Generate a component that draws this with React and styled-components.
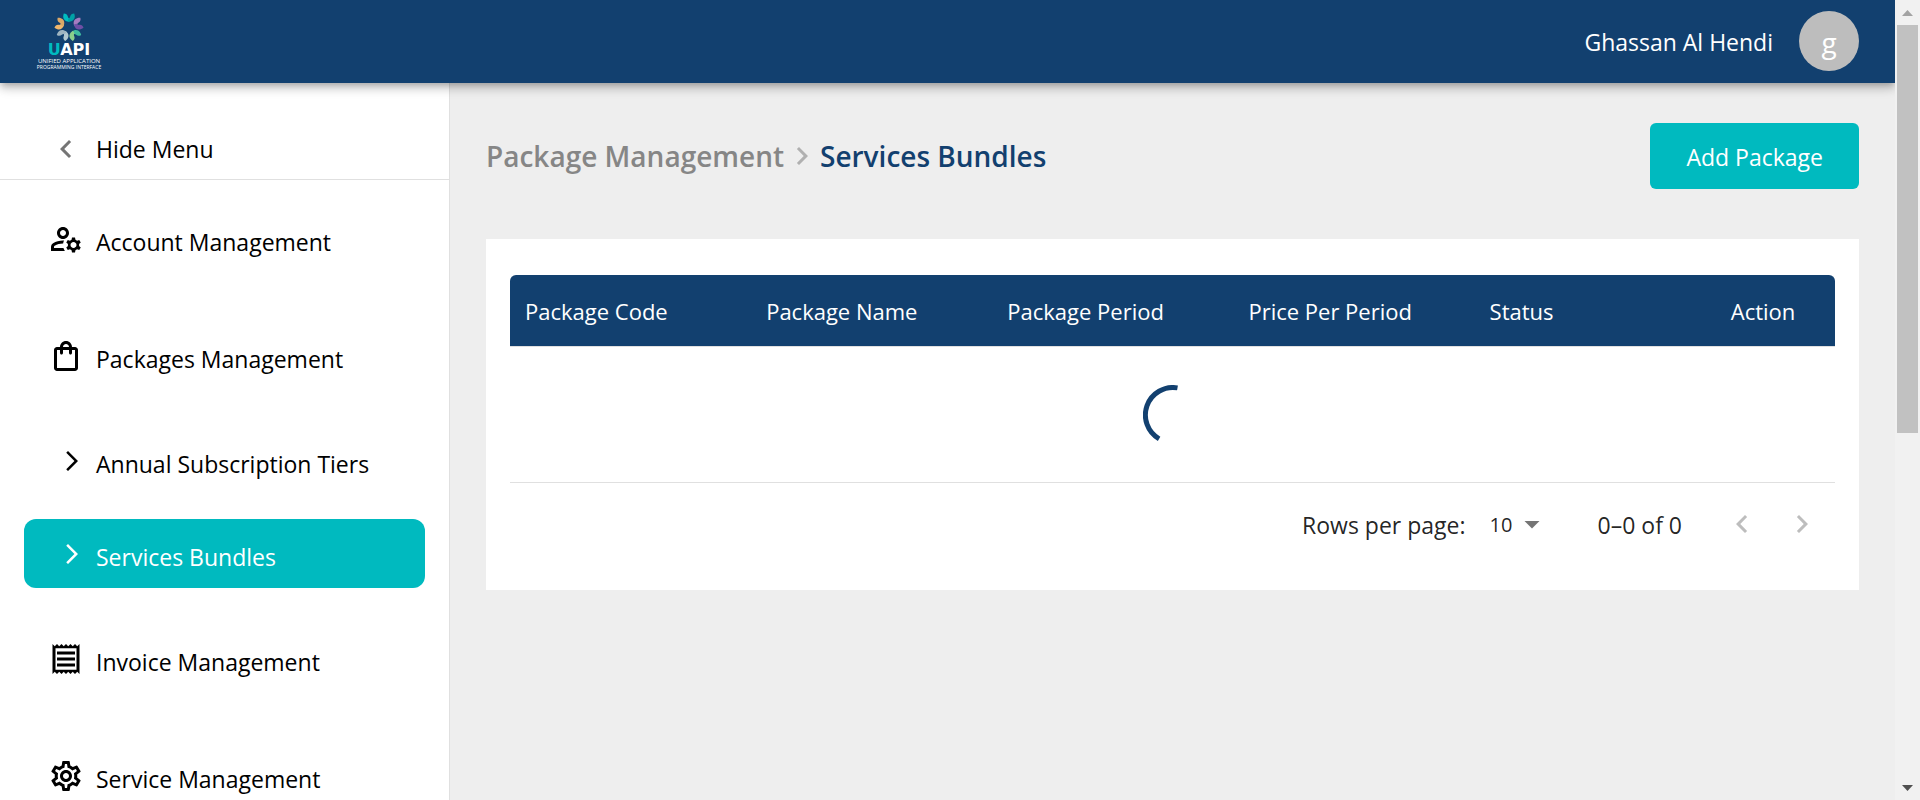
import React from "react";
import styled, { createGlobalStyle } from "styled-components";
import {
  MdArrowDropDown,
  MdArrowForwardIos,
  MdChevronLeft,
  MdChevronRight,
  MdOutlineManageAccounts,
  MdOutlineReceipt,
  MdOutlineSettings,
  MdOutlineShoppingBag,
} from "react-icons/md";

const color = {
  navy: "#12406f",
  teal: "#00babf",
  page: "#eeeeee",
  line: "#e0e0e0",
  muted: "#868686",
  disabled: "#bdbdbd",
  text: "rgba(0, 0, 0, 0.87)",
};

const GlobalStyle = createGlobalStyle`
  *, *::before, *::after { box-sizing: border-box; }
  body {
    margin: 0;
    overflow: hidden;
    background: ${color.page};
    font-family: "Open Sans", "Noto Sans", sans-serif;
    font-size: 23px;
    line-height: 32px;
    color: #000;
  }
  button, select { font: inherit; color: inherit; }
  svg { display: block; flex: none; }
`;

const Window = styled.div`
  display: flex;
  height: 100vh;
  overflow: hidden;
`;

const Shell = styled.div`
  flex: 1;
  min-width: 0;
  display: flex;
  flex-direction: column;
  overflow: hidden;
`;

const TopBar = styled.header`
  flex: none;
  display: flex;
  align-items: center;
  justify-content: space-between;
  height: 83px;
  padding: 0 36px 2px;
  background: ${color.navy};
  color: #fff;
  z-index: 1;
  box-shadow: 0 3px 6px -2px rgba(0, 0, 0, 0.2), 0 6px 8px rgba(0, 0, 0, 0.14),
    0 2px 15px rgba(0, 0, 0, 0.12);
`;

const Logo = styled.a`
  display: flex;
  flex-direction: column;
  align-items: center;
  width: 66px;
  color: #fff;
  text-decoration: none;
  white-space: nowrap;
`;

const Wordmark = styled.span`
  font-family: "DejaVu Sans", sans-serif;
  font-weight: 700;
  font-size: 16px;
  line-height: 16px;
`;

const WordmarkAccent = styled.span`
  color: ${color.teal};
`;

const Tagline = styled.span`
  font-size: ${(p) => p.$size}px;
  line-height: 6px;
`;

const User = styled.div`
  display: flex;
  align-items: center;
  gap: 26px;
`;

const Avatar = styled.span`
  display: flex;
  align-items: center;
  justify-content: center;
  width: 60px;
  height: 60px;
  padding-top: 2px;
  border-radius: 50%;
  background: ${color.disabled};
  font-size: 28px;
`;

const UserName = styled.span`
  padding-top: 2px;
`;

const Body = styled.div`
  flex: 1;
  min-height: 0;
  display: flex;
`;

const Sidebar = styled.nav`
  flex: none;
  width: 450px;
  overflow: hidden;
  background: #fff;
  border-right: 1px solid ${color.line};
`;

const HideMenu = styled.button`
  display: flex;
  align-items: center;
  gap: 12px;
  width: 100%;
  padding: 48px 48px 12px;
  border: 0;
  border-bottom: 1px solid ${color.line};
  background: none;
  text-align: left;

  svg { color: #757575; }
`;

const MenuList = styled.ul`
  display: flex;
  flex-direction: column;
  margin: 0;
  padding: 0 24px;
  list-style: none;
`;

const MenuItem = styled.li`
  padding: ${(p) => (p.$sub ? 12 : 24)}px 0;
`;

const MenuLink = styled.a`
  display: flex;
  align-items: center;
  gap: 12px;
  height: 69px;
  padding: 0 24px;
  border-radius: 12px;
  background: ${(p) => (p.$active ? color.teal : "transparent")};
  color: ${(p) => (p.$active ? "#fff" : "#000")};
  text-decoration: none;
`;

const MenuIcon = styled.span`
  display: flex;
  justify-content: flex-end;
  width: 36px;
`;

const MenuLabel = styled.span`
  padding-top: 6px;
`;

const Main = styled.main`
  flex: 1;
  min-width: 0;
  padding: 40px 36px;
`;

const PageHead = styled.div`
  display: flex;
  align-items: center;
  justify-content: space-between;
  margin-bottom: 50px;
`;

const Crumbs = styled.ol`
  display: flex;
  align-items: center;
  margin: 0;
  padding: 0;
  list-style: none;
  font-size: 28px;
  line-height: 40px;
  font-weight: 600;
  color: ${color.muted};

  li { display: flex; align-items: center; }
  svg { color: #b0b0b0; }
`;

const CrumbLink = styled.a`
  color: ${(p) => (p.$current ? color.navy : color.muted)};
  text-decoration: none;
`;

const PrimaryButton = styled.button`
  height: 66px;
  padding: 2px 36px 0;
  border: 0;
  border-radius: 6px;
  background: ${color.teal};
  color: #fff;
`;

const Card = styled.section`
  padding: 36px 24px;
  background: #fff;
`;

const Table = styled.table`
  width: 100%;
  table-layout: fixed;
  border-collapse: separate;
  border-spacing: 0;
`;

const HeadCell = styled.th`
  height: 72px;
  padding: 0 15px;
  background: ${color.navy};
  background-clip: padding-box;
  border-bottom: 1px solid ${color.line};
  color: #fff;
  font-size: 22px;
  font-weight: 400;
  text-align: left;
  white-space: nowrap;

  &:first-child { border-top-left-radius: 6px; }
  &:last-child { width: 9%; border-top-right-radius: 6px; }
`;

const LoadingCell = styled.td`
  height: 136px;
  padding: 0;
  border-bottom: 1px solid ${color.line};

  svg { margin: 0 auto; }
`;

const Pagination = styled.div`
  display: flex;
  align-items: center;
  justify-content: flex-end;
  padding: 11px 3px 0 0;
  color: ${color.text};
`;

const PagerText = styled.span`
  padding-top: 2px;
`;

const SelectWrap = styled.label`
  display: flex;
  align-items: center;
  gap: 24px;
  margin-right: 48px;
`;

const SelectBox = styled.span`
  display: flex;
  align-items: center;

  svg { margin-left: -36px; color: #757575; pointer-events: none; }
`;

const RowsSelect = styled.select`
  appearance: none;
  width: 60px;
  padding: 2px 0 0;
  border: 0;
  background: none;
  font-size: 20px;
`;

const PageButton = styled.button`
  display: flex;
  padding: 12px;
  border: 0;
  background: none;
  color: ${color.disabled};
`;

const PageButtons = styled.div`
  display: flex;
  margin-left: 30px;
`;

const ScrollTrack = styled.div`
  flex: none;
  display: flex;
  flex-direction: column;
  align-items: center;
  width: 25px;
  background: #f1f1f1;
`;

const ScrollEnd = styled.span`
  display: flex;
  align-items: center;
  justify-content: center;
  height: 25px;
`;

const ScrollLane = styled.div`
  flex: 1;
  width: 21px;
`;

const ScrollThumb = styled.div`
  height: 54.4%;
  background: #c1c1c1;
`;

const petals = [
  { left: "#00bcc0", right: "#00a2a6" },
  { left: "#a57cc0", right: "#6f4fa5" },
  { left: "#3fbba0", right: "#8bcf8b" },
  { left: "#b3c8d0", right: "#9fb4c0" },
  { left: "#f0b76c", right: "#d9a869" },
];

function Flower() {
  return (
    <svg width="30" height="30" viewBox="-15 -15 30 30" aria-hidden="true">
      {petals.map((p, i) => (
        <g key={p.left} transform={`rotate(${i * 72})`}>
          <path
            d="M-5.200-13.600C-3-13.600-1.600-12.400-1.200-10.600C-.9-9.400-.4-8.800 .6-8.400L.6-5.400C-3.400-5-5.800-7.400-5.800-10.400C-5.800-11.600-5.600-12.800-5.200-13.600Z"
            fill={p.left}
          />
          <path
            d="M5.200-13.600C3-13.600 1.600-12.400 1.200-10.600C.9-9.400 .4-8.600-.8-8.200L-1-5.400C3.400-5 5.800-7.400 5.800-10.400C5.800-11.600 5.600-12.800 5.200-13.600Z"
            fill={p.right}
          />
        </g>
      ))}
    </svg>
  );
}

function Spinner() {
  return (
    <svg width="60" height="60" viewBox="0 0 60 60" role="img" aria-label="Loading">
      <path
        d="M34.500 2.900A27.500 27.500 0 0 0 16.100 53.800"
        fill="none"
        stroke={color.navy}
        strokeWidth="5"
      />
    </svg>
  );
}

const menu = [
  { label: "Account Management", icon: MdOutlineManageAccounts },
  { label: "Packages Management", icon: MdOutlineShoppingBag },
  { label: "Annual Subscription Tiers", icon: MdArrowForwardIos, sub: true },
  { label: "Services Bundles", icon: MdArrowForwardIos, sub: true, active: true },
  { label: "Invoice Management", icon: MdOutlineReceipt },
  { label: "Service Management", icon: MdOutlineSettings },
];

const columns = [
  "Package Code",
  "Package Name",
  "Package Period",
  "Price Per Period",
  "Status",
  "Action",
];

function SideMenu() {
  return (
    <Sidebar aria-label="Main menu">
      <HideMenu type="button">
        <MdChevronLeft size={36} />
        Hide Menu
      </HideMenu>
      <MenuList>
        {menu.map(({ label, icon: Icon, sub, active }) => (
          <MenuItem key={label} $sub={sub}>
            <MenuLink href="#" $active={active} aria-current={active ? "page" : undefined}>
              <MenuIcon>
                <Icon size={sub ? 24 : 36} />
              </MenuIcon>
              <MenuLabel>{label}</MenuLabel>
            </MenuLink>
          </MenuItem>
        ))}
      </MenuList>
    </Sidebar>
  );
}

function PackagesCard() {
  return (
    <Card>
      <Table>
        <thead>
          <tr>
            {columns.map((name) => (
              <HeadCell key={name} scope="col">{name}</HeadCell>
            ))}
          </tr>
        </thead>
        <tbody>
          <tr>
            <LoadingCell colSpan={columns.length}>
              <Spinner />
            </LoadingCell>
          </tr>
        </tbody>
      </Table>
      <Pagination>
        <SelectWrap>
          <PagerText>Rows per page:</PagerText>
          <SelectBox>
            <RowsSelect defaultValue="10">
              <option>10</option>
              <option>25</option>
              <option>50</option>
            </RowsSelect>
            <MdArrowDropDown size={36} />
          </SelectBox>
        </SelectWrap>
        <PagerText>0–0 of 0</PagerText>
        <PageButtons>
          <PageButton type="button" disabled aria-label="Previous page">
            <MdChevronLeft size={36} />
          </PageButton>
          <PageButton type="button" disabled aria-label="Next page">
            <MdChevronRight size={36} />
          </PageButton>
        </PageButtons>
      </Pagination>
    </Card>
  );
}

function ScrollBar() {
  return (
    <ScrollTrack aria-hidden="true">
      <ScrollEnd>
        <svg width="11" height="6" viewBox="0 0 11 6"><path d="M0 6L5.500 0L11 6Z" fill="#a3a3a3" /></svg>
      </ScrollEnd>
      <ScrollLane>
        <ScrollThumb />
      </ScrollLane>
      <ScrollEnd>
        <svg width="11" height="6" viewBox="0 0 11 6"><path d="M0 0L5.500 6L11 0Z" fill="#505050" /></svg>
      </ScrollEnd>
    </ScrollTrack>
  );
}

export default function App() {
  return (
    <Window>
      <GlobalStyle />
      <Shell>
        <TopBar>
          <Logo href="#">
            <Flower />
            <Wordmark><WordmarkAccent>U</WordmarkAccent>API</Wordmark>
            <Tagline $size={6}>UNIFIED APPLICATION</Tagline>
            <Tagline $size={5}>PROGRAMMING INTERFACE</Tagline>
          </Logo>
          <User>
            <UserName>Ghassan Al Hendi</UserName>
            <Avatar>g</Avatar>
          </User>
        </TopBar>
        <Body>
          <SideMenu />
          <Main>
            <PageHead>
              <nav aria-label="Breadcrumb">
                <Crumbs>
                  <li>
                    <CrumbLink href="#">Package Management</CrumbLink>
                    <MdChevronRight size={36} />
                  </li>
                  <li>
                    <CrumbLink href="#" $current aria-current="page">Services Bundles</CrumbLink>
                  </li>
                </Crumbs>
              </nav>
              <PrimaryButton type="button">Add Package</PrimaryButton>
            </PageHead>
            <PackagesCard />
          </Main>
        </Body>
      </Shell>
      <ScrollBar />
    </Window>
  );
}
